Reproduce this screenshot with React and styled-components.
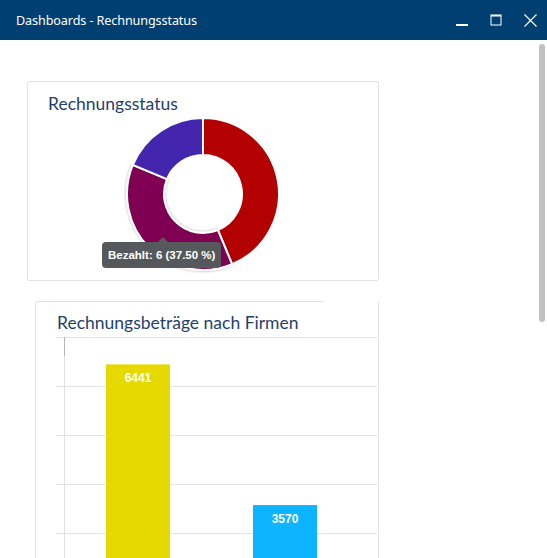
import React from 'react';
import styled, { createGlobalStyle } from 'styled-components';

const GlobalStyle = createGlobalStyle`
  html, body {
    margin: 0;
    padding: 0;
    background: #ffffff;
    overflow: hidden;
  }
  body {
    font-family: "Noto Sans", "Liberation Sans", sans-serif;
  }
`;

const Window = styled.div`
  width: 547px;
  height: 558px;
  display: flex;
  flex-direction: column;
  background: #ffffff;
`;

const TitleBar = styled.div`
  height: 40px;
  flex: 0 0 40px;
  background: #003f72;
  display: flex;
  align-items: center;
  padding-left: 16px;
  color: #ffffff;
`;

const TitleText = styled.div`
  flex: 1;
  font-family: "Noto Sans", "Liberation Sans", sans-serif;
  font-size: 12.6px;
  letter-spacing: -0.1px;
`;

const WinButton = styled.button`
  flex: 0 0 34px;
  width: 34px;
  height: 40px;
  border: 0;
  padding: 0;
  margin: 0;
  background: transparent;
  display: flex;
  align-items: center;
  justify-content: center;
`;

const Body = styled.div`
  flex: 1;
  display: flex;
  min-height: 0;
`;

const Content = styled.div`
  flex: 1;
  overflow: hidden;
  padding: 41px 0 0 0;
`;

const ScrollTrack = styled.div`
  flex: 0 0 10px;
  box-sizing: border-box;
  padding: 4px 2px;
`;

const ScrollThumb = styled.div`
  height: ${p => p.$size}px;
  border-radius: 3px;
  background: #c1c1c1;
`;

const Card = styled.div`
  position: relative;
  box-sizing: border-box;
  margin-left: ${p => p.$left}px;
  margin-bottom: ${p => p.$bottom || 0}px;
  width: ${p => p.$width}px;
  border: 1px solid #e2e2e2;
  border-radius: 2px;
  background: #ffffff;
  padding: ${p => p.$pad};
`;

const CardTitle = styled.h2`
  margin: 0;
  font-family: Lato, "Open Sans", sans-serif;
  font-weight: 400;
  font-size: 17.5px;
  line-height: 22px;
  color: #1f3f6c;
`;

const DonutWrap = styled.div`
  display: flex;
  justify-content: center;
  margin-top: -1px;
  margin-left: -20px;
  margin-right: -20px;
`;

const Tooltip = styled.div`
  position: absolute;
  left: 74px;
  top: 160px;
  height: 26px;
  padding: 0 6px;
  display: flex;
  align-items: center;
  background: #55595c;
  border-radius: 4px;
  color: #ffffff;
  font-family: "Liberation Sans", Arial, sans-serif;
  font-weight: 700;
  font-size: 11.5px;
  white-space: nowrap;

  &::before {
    content: "";
    position: absolute;
    left: 56px;
    top: -5px;
    border-left: 5px solid transparent;
    border-right: 5px solid transparent;
    border-bottom: 5px solid #55595c;
  }
`;

const HiddenTools = styled.div`
  position: absolute;
  top: -1px;
  right: 0;
  width: 54px;
  height: 3px;
  background: #ffffff;
`;

const ChartArea = styled.div`
  margin-top: 3px;
  margin-left: -1px;
`;

const segments = [
  { label: 'Offen', value: 7, color: '#b30000' },
  { label: 'Bezahlt', value: 6, color: '#7f0053' },
  { label: 'Storniert', value: 3, color: '#4426ae' },
];

const arcPath = (cx, cy, r0, r1, a0, a1) => {
  const pt = (r, a) => {
    const rad = (a - 90) * Math.PI / 180;
    return [cx + r * Math.cos(rad), cy + r * Math.sin(rad)];
  };
  const large = a1 - a0 > 180 ? 1 : 0;
  const [x0, y0] = pt(r1, a0);
  const [x1, y1] = pt(r1, a1);
  const [x2, y2] = pt(r0, a1);
  const [x3, y3] = pt(r0, a0);
  return `M${x0} ${y0} A${r1} ${r1} 0 ${large} 1 ${x1} ${y1} L${x2} ${y2} A${r0} ${r0} 0 ${large} 0 ${x3} ${y3} Z`;
};

const Donut = () => {
  const total = segments.reduce((s, x) => s + x.value, 0);
  let angle = 0;
  return (
    <svg width="170" height="160" viewBox="0 0 170 160">
      <defs>
        <filter id="hov" x="-20%" y="-20%" width="140%" height="140%">
          <feDropShadow dx="0" dy="0" stdDeviation="1.5" floodColor="#000" floodOpacity="0.35" />
        </filter>
      </defs>
      {segments.map((s, i) => {
        const a0 = angle;
        const a1 = angle + (s.value / total) * 360;
        angle = a1;
        return (
          <path
            key={s.label}
            d={arcPath(85, 80, 39, 76, a0, a1)}
            fill={s.color}
            stroke="#ffffff"
            strokeWidth="2"
            filter={i === 1 ? 'url(#hov)' : undefined}
          />
        );
      })}
    </svg>
  );
};

const bars = [
  { name: 'Firma A', value: 6441, color: '#e5d900', x: 50 },
  { name: 'Firma B', value: 3570, color: '#0db4ff', x: 197 },
];

const BarChart = () => {
  const base = 343;
  const k = 0.049;
  const lines = [0, 1, 2, 3, 4, 5, 6, 7];
  return (
    <svg width="324" height="380" viewBox="0 0 324 380">
      {lines.map(v => (
        <line key={v} x1="0" x2="321" y1={base - v * 1000 * k + 0.5} y2={base - v * 1000 * k + 0.5} stroke="#e3e3e3" strokeWidth="1" />
      ))}
      <line x1="8.5" x2="8.5" y1="0" y2={base} stroke="#e0e0e0" strokeWidth="1" />
      <line x1="8.5" x2="8.5" y1="0" y2="19" stroke="#b5b5b5" strokeWidth="1" />
      {bars.map(b => {
        const top = base - b.value * k;
        return (
          <g key={b.name}>
            <rect x={b.x} y={top} width="64" height={base - top} fill={b.color} />
            <text
              x={b.x + 32}
              y={top + 18}
              textAnchor="middle"
              fill="#ffffff"
              fontFamily="Liberation Sans, Arial, sans-serif"
              fontWeight="700"
              fontSize="12"
            >
              {b.value}
            </text>
          </g>
        );
      })}
    </svg>
  );
};

const App = () => (
  <>
    <GlobalStyle />
    <Window>
      <TitleBar>
        <TitleText>Dashboards - Rechnungsstatus</TitleText>
        <WinButton aria-label="Minimieren">
          <svg width="12" height="12" viewBox="0 0 12 12">
            <rect x="0" y="10" width="12" height="2" fill="#ffffff" />
          </svg>
        </WinButton>
        <WinButton aria-label="Maximieren">
          <svg width="12" height="12" viewBox="0 0 12 12">
            <rect x="1" y="1" width="10" height="10" fill="none" stroke="#ffffff" strokeWidth="1" />
            <rect x="1" y="1" width="10" height="1.5" fill="#ffffff" />
          </svg>
        </WinButton>
        <WinButton aria-label="Schließen">
          <svg width="13" height="13" viewBox="0 0 13 13">
            <path d="M0.5 0.5 L12.5 12.5 M12.5 0.5 L0.5 12.5" stroke="#ffffff" strokeWidth="1.2" />
          </svg>
        </WinButton>
      </TitleBar>
      <Body>
        <Content>
          <Card $left={27} $width={352} $bottom={20} $pad="11px 20px 6px 20px">
            <CardTitle>Rechnungsstatus</CardTitle>
            <DonutWrap>
              <Donut />
            </DonutWrap>
            <Tooltip>Bezahlt: 6 (37.50 %)</Tooltip>
          </Card>
          <Card $left={35} $width={344} $pad="10px 0 0 21px">
            <HiddenTools />
            <CardTitle>Rechnungsbeträge nach Firmen</CardTitle>
            <ChartArea>
              <BarChart />
            </ChartArea>
          </Card>
        </Content>
        <ScrollTrack>
          <ScrollThumb $size={278} />
        </ScrollTrack>
      </Body>
    </Window>
  </>
);

export default App;
